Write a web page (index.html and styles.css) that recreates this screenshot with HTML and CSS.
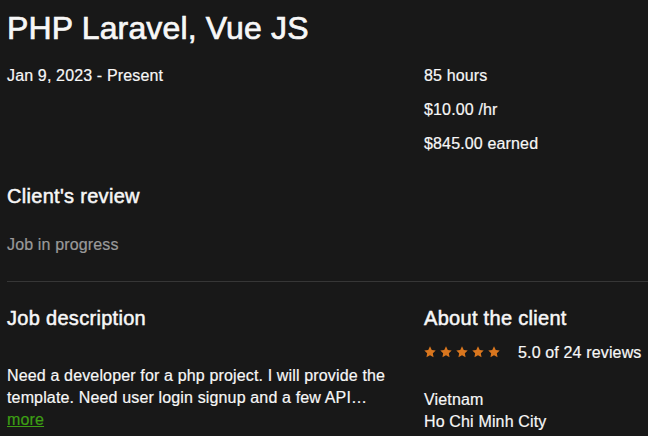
FILE: index.html
```html
<!DOCTYPE html>
<html>
  <head>
    <title>PHP Laravel, Vue JS</title>
    <link rel="stylesheet" href="styles.css">
  </head>
  <body>
    <div class="contract">
      <h1 class="job-title">PHP Laravel, Vue JS</h1>

      <div class="row top-row">
        <div class="col-main">
          <p class="dates">Jan 9, 2023 - Present</p>

          <h2 class="section-title review-title">Client's review</h2>
          <p class="muted">Job in progress</p>
        </div>
        <ul class="stats">
          <li>85 hours</li>
          <li>$10.00 /hr</li>
          <li>$845.00 earned</li>
        </ul>
      </div>

      <hr class="divider">

      <div class="row">
        <div class="col-main">
          <h2 class="section-title">Job description</h2>
          <p class="description">Need a developer for a php project. I will provide the template. Need user login signup and a few API&hellip;</p>
          <a class="more" href="#">more</a>
        </div>
        <div class="col-side">
          <h2 class="section-title">About the client</h2>
          <div class="rating">
            <span class="stars">
              <svg viewBox="0 0 24 24"><path d="M12 .6l3.5 7.2 7.9 1.1-5.7 5.6 1.4 7.9L12 18.7l-7.1 3.7 1.4-7.9L.6 8.9l7.9-1.1z"/></svg>
              <svg viewBox="0 0 24 24"><path d="M12 .6l3.5 7.2 7.9 1.1-5.7 5.6 1.4 7.9L12 18.7l-7.1 3.7 1.4-7.9L.6 8.9l7.9-1.1z"/></svg>
              <svg viewBox="0 0 24 24"><path d="M12 .6l3.5 7.2 7.9 1.1-5.7 5.6 1.4 7.9L12 18.7l-7.1 3.7 1.4-7.9L.6 8.9l7.9-1.1z"/></svg>
              <svg viewBox="0 0 24 24"><path d="M12 .6l3.5 7.2 7.9 1.1-5.7 5.6 1.4 7.9L12 18.7l-7.1 3.7 1.4-7.9L.6 8.9l7.9-1.1z"/></svg>
              <svg viewBox="0 0 24 24"><path d="M12 .6l3.5 7.2 7.9 1.1-5.7 5.6 1.4 7.9L12 18.7l-7.1 3.7 1.4-7.9L.6 8.9l7.9-1.1z"/></svg>
            </span>
            <span>5.0 of 24 reviews</span>
          </div>
          <div class="location">
            <div>Vietnam</div>
            <div>Ho Chi Minh City</div>
          </div>
        </div>
      </div>
    </div>
  </body>
</html>
```

FILE: styles.css
```css
body {
  margin: 0;
  background-color: #181818;
  color: #f7f7f7;
  font-family: "Liberation Sans", Arial, sans-serif;
  font-size: 16px;
  letter-spacing: 0.15px;
  -webkit-text-stroke: 0.2px currentColor;
  overflow: hidden;
}
.contract {
  padding: 8px 0 0 7px;
}
.job-title {
  margin: 0;
  font-size: 32px;
  line-height: 40px;
  font-weight: normal;
  -webkit-text-stroke: 0.7px currentColor;
}
.row {
  display: grid;
  grid-template-columns: 417px 1fr;
}
.top-row {
  margin-top: 16px;
}
p {
  margin: 0;
  line-height: 24px;
}
.section-title {
  margin: 0;
  font-size: 20px;
  line-height: 28px;
  font-weight: normal;
  letter-spacing: 0.3px;
  -webkit-text-stroke: 0.5px currentColor;
}
.review-title {
  margin-top: 94px;
}
.muted {
  color: #9a9a9a;
  margin-top: 23px;
}
.stats {
  list-style-type: none;
  margin: 0;
  padding: 0;
  display: flex;
  flex-direction: column;
  gap: 10px;
}
.stats li {
  line-height: 24px;
}
.divider {
  border: none;
  border-top: 1px solid #363636;
  margin: 24px 0 0 0;
}
.row + .divider + .row {
  margin-top: 22px;
}
.description {
  margin-top: 33px;
  max-width: 400px;
  line-height: 22px;
}
.more {
  color: #3d9f14;
  line-height: 22px;
  text-decoration: underline;
}
.rating {
  display: flex;
  align-items: center;
  margin-top: 9px;
  line-height: 24px;
}
.stars {
  display: flex;
  gap: 4px;
  margin-right: 18px;
  position: relative;
  top: -1px;
}
.stars svg {
  width: 12px;
  height: 12px;
  fill: #d9761e;
}
.location {
  margin-top: 24px;
  line-height: 22px;
}
```
